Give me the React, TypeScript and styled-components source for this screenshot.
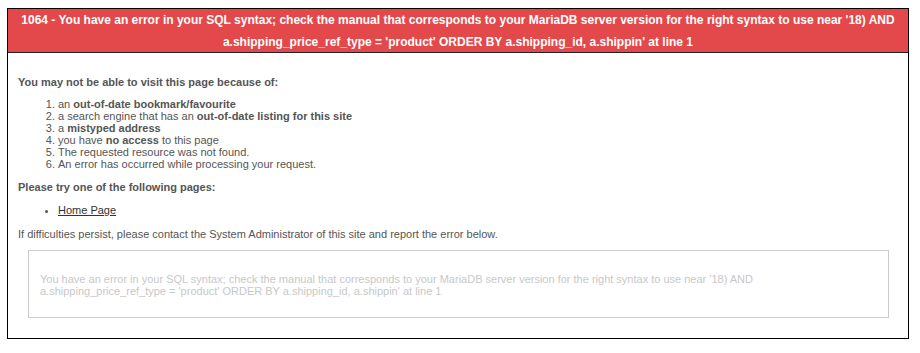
import React from "react";
import styled, { createGlobalStyle } from "styled-components";

const GlobalStyle = createGlobalStyle`
  html, body { margin: 0; padding: 0; background: #fff; }
  body { font-family: "Liberation Sans", Arial, sans-serif; }
`;

const Page = styled.div`
  padding: 8px 0 0 7px;
`;

const Frame = styled.div`
  width: 900px;
  border: 1px solid #000;
  background: #fff;
`;

const Banner = styled.div`
  background: #e3484b;
  border-bottom: 1px solid #222;
  color: #fff;
  font-weight: bold;
  font-size: 12px;
  line-height: 22px;
  height: 43px;
  text-align: center;
  padding: 0 10px;
`;

const Body = styled.div`
  padding: 23px 10px 20px 10px;
  color: #555;
  font-size: 11px;
  line-height: 12px;
`;

const Heading = styled.p<{ $gap?: number }>`
  margin: 0 0 ${(p) => p.$gap ?? 10}px 0;
  font-weight: bold;
`;

const Reasons = styled.ol`
  margin: 0 0 11px 0;
  padding-left: 40px;
`;

const Pages = styled.ul`
  margin: 0 0 12px 0;
  padding-left: 40px;
  list-style: disc;
`;

const Strong = styled.b`
  font-weight: bold;
`;

const HomeLink = styled.a`
  color: #333;
  text-decoration: underline;
`;

const Note = styled.p`
  margin: 0 0 10px 0;
`;

const ErrorBox = styled.div`
  margin: 0 9px 0 10px;
  border: 1px solid #ccc;
  padding: 22px 10px 20px 11px;
  color: #c8c8c8;
`;

export default function App() {
  return (
    <>
      <GlobalStyle />
      <Page>
        <Frame>
          <Banner>
            1064 - You have an error in your SQL syntax; check the manual that corresponds to your MariaDB server version for the right syntax to use near '18) AND
            <br />
            a.shipping_price_ref_type = 'product' ORDER BY a.shipping_id, a.shippin' at line 1
          </Banner>
          <Body>
            <Heading>You may not be able to visit this page because of:</Heading>
            <Reasons>
              <li>an <Strong>out-of-date bookmark/favourite</Strong></li>
              <li>a search engine that has an <Strong>out-of-date listing for this site</Strong></li>
              <li>a <Strong>mistyped address</Strong></li>
              <li>you have <Strong>no access</Strong> to this page</li>
              <li>The requested resource was not found.</li>
              <li>An error has occurred while processing your request.</li>
            </Reasons>
            <Heading $gap={11}>Please try one of the following pages:</Heading>
            <Pages>
              <li>
                <HomeLink href="#" title="Go to the Home Page">Home Page</HomeLink>
              </li>
            </Pages>
            <Note>If difficulties persist, please contact the System Administrator of this site and report the error below.</Note>
            <ErrorBox>
              You have an error in your SQL syntax; check the manual that corresponds to your MariaDB server version for the right syntax to use near '18) AND
              <br />
              a.shipping_price_ref_type = 'product' ORDER BY a.shipping_id, a.shippin' at line 1
            </ErrorBox>
          </Body>
        </Frame>
      </Page>
    </>
  );
}
